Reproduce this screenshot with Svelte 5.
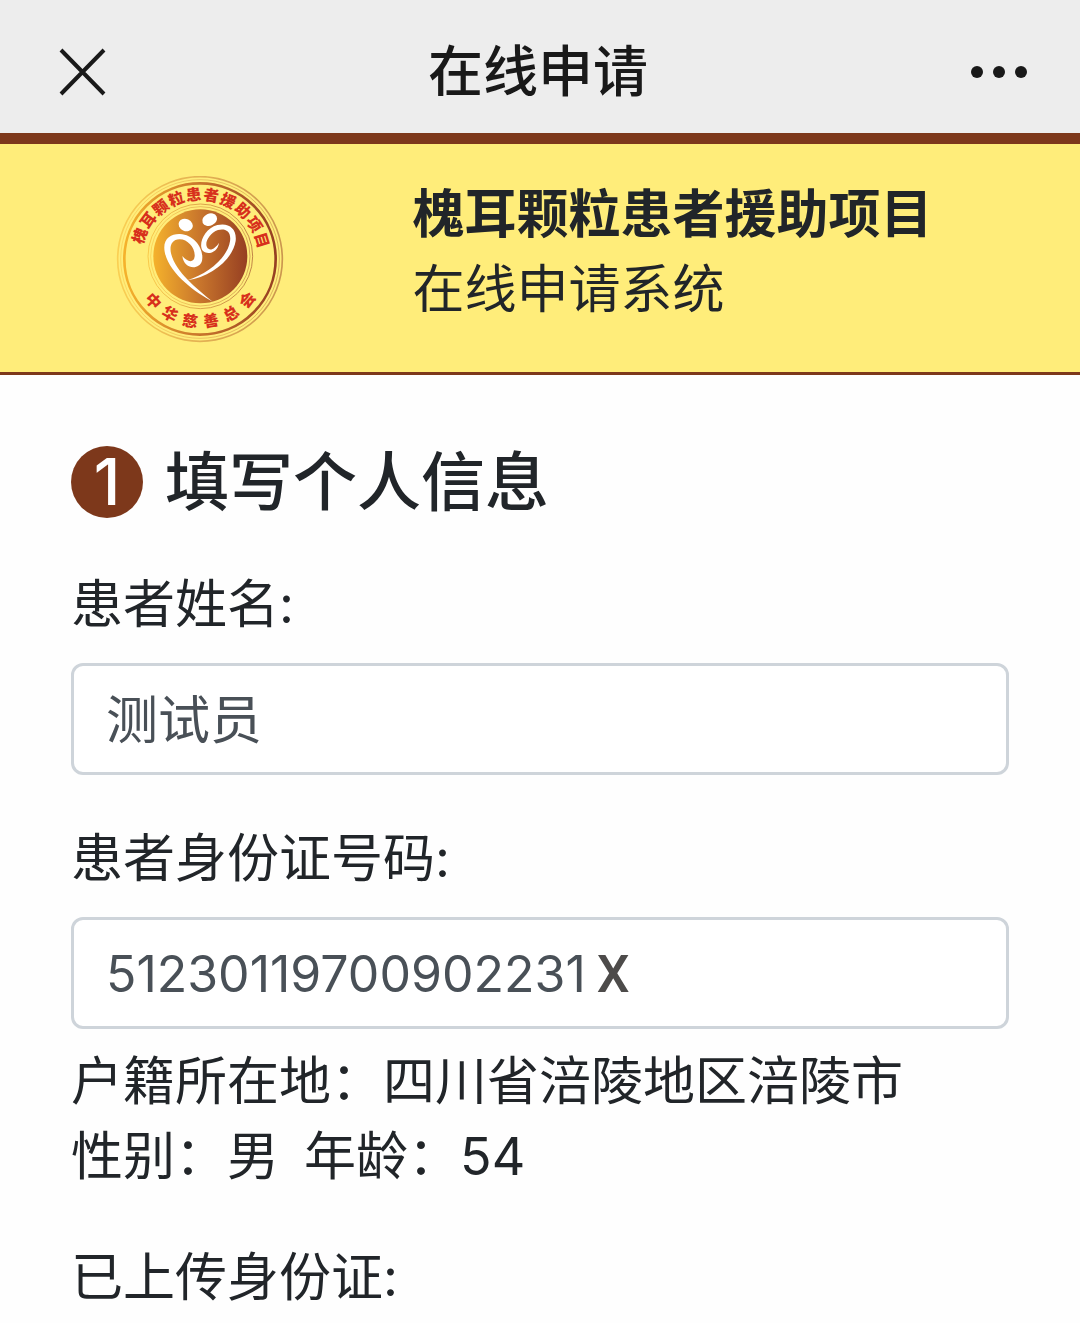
<script lang="ts">
  let name = $state('测试员')
  let idNumber = $state('51230119700902231')

  const profile = {
    region: '四川省涪陵地区涪陵市',
    gender: '男',
    age: 54,
  }

  // characters set around the logo ring, angles in degrees
  const ringTop = [...'槐耳颗粒患者援助项目'].map((char, i) => ({ char, angle: -69 + i * 15.8 }))
  const ringBottom = [...'中华慈善总会'].map((char, i) => ({ char, angle: 48 - i * 19.4 }))
</script>

<nav class="nav-bar">
  <button class="nav-btn" aria-label="关闭">
    <svg width="48" height="48" viewBox="0 0 48 48">
      <path d="M3 2 L46 46 M46 2 L3 46" fill="none" stroke="#191919" stroke-width="4" />
    </svg>
  </button>
  <div class="nav-title">在线申请</div>
  <button class="nav-btn" aria-label="更多">
    <svg width="58" height="14" viewBox="0 0 58 14">
      <circle cx="7" cy="7" r="6" fill="#191919" />
      <circle cx="29" cy="7" r="6" fill="#191919" />
      <circle cx="51" cy="7" r="6" fill="#191919" />
    </svg>
  </button>
</nav>

<header class="banner">
  <div class="logo">
    <svg width="168" height="168" viewBox="48 48 504 504" role="img" aria-label="槐耳颗粒患者援助项目">
      <defs>
        <linearGradient id="disc" x1="0" x2="1" y1="0" y2="0">
          <stop offset="0" stop-color="#f5b22c" />
          <stop offset="0.5" stop-color="#c8752c" />
          <stop offset="1" stop-color="#963f22" />
        </linearGradient>
      </defs>
      <g fill="none" stroke="url(#disc)">
        <circle cx="300" cy="297" r="247" stroke-width="5" opacity="0.5" />
        <circle cx="300" cy="297" r="238" stroke-width="3" opacity="0.35" />
        <circle cx="300" cy="297" r="227" stroke-width="8" />
        <circle cx="301" cy="289" r="157" stroke-width="3" opacity="0.6" />
        <circle cx="301" cy="289" r="149" stroke-width="3" opacity="0.4" />
      </g>
      <circle cx="301" cy="289" r="141" fill="url(#disc)" />
      <g fill="#fff">
        <ellipse cx="257" cy="195" rx="22" ry="18" transform="rotate(25 257 195)" />
        <ellipse cx="329" cy="179" rx="23" ry="18" transform="rotate(-25 329 179)" />
        <path d="M338 425 C285 396 206 340 194 275 C187 236 213 221 240 222 C283 224 313 267 306 302 C299 330 252 330 247 288 C263 308 282 309 284 289 C286 263 262 237 238 238 C216 239 208 257 213 280 C226 335 290 386 338 425 Z" />
        <path d="M262 361 C323 342 383 293 390 244 C395 212 374 204 354 210 C329 219 313 247 321 262 C329 276 347 265 357 248 C354 276 325 286 310 274 C292 257 312 205 352 195 C386 187 411 205 407 243 C399 297 334 351 262 361 Z" />
      </g>
      <g class="logo-text">
        {#each ringTop as { char, angle }}
          <text x="300" y="120" transform="rotate({angle} 300 297)">{char}</text>
        {/each}
        {#each ringBottom as { char, angle }}
          <text x="300" y="502" transform="rotate({angle} 300 297)">{char}</text>
        {/each}
      </g>
    </svg>
  </div>
  <div class="banner-text">
    <strong>槐耳颗粒患者援助项目</strong>
    <span>在线申请系统</span>
  </div>
</header>

<main>
  <h1><span class="step">1</span>填写个人信息</h1>

  <div class="field">
    <label for="patient-name">患者姓名:</label>
    <div class="control">
      <input id="patient-name" class="full" type="text" bind:value={name} />
    </div>
  </div>

  <div class="field">
    <label for="patient-id">患者身份证号码:</label>
    <div class="control">
      <input id="patient-id" class="number" type="text" bind:value={idNumber} />
      <span class="check-digit">X</span>
    </div>
    <div class="info">
      <p>户籍所在地：{profile.region}</p>
      <p><span>性别：{profile.gender}</span><span>年龄：{profile.age}</span></p>
    </div>
  </div>

  <div class="field">
    <div class="label">已上传身份证:</div>
  </div>
</main>

<style>
  :global(body) {
    margin: 0;
    background: #fefefe;
    color: #212529;
    font-family: Inter, 'Noto Sans CJK SC', sans-serif;
    font-size: 52px;
    line-height: 75px;
  }
  .nav-bar {
    display: flex;
    align-items: center;
    justify-content: space-between;
    padding: 34px 52px 24px 58px;
    background: #ededed;
    color: #191919;
  }
  .nav-btn {
    display: flex;
    padding: 0;
    border: none;
    background: none;
    cursor: pointer;
  }
  .nav-title {
    font-size: 55px;
    font-weight: 500;
  }
  .banner {
    display: flex;
    padding: 32px 0 28px;
    border-top: 11px solid #7d381b;
    border-bottom: 3px solid #7d381b;
    background: #ffed7a;
  }
  .logo {
    display: flex;
    justify-content: center;
    width: 37%;
  }
  .logo-text {
    fill: #d7301c;
    font-family: 'Noto Sans CJK SC', sans-serif;
    font-size: 46px;
    font-weight: 900;
    text-anchor: middle;
  }
  .banner-text {
    display: flex;
    flex-direction: column;
    padding: 1px 0 0 13px;
  }
  main {
    padding: 71px 71px 10px;
  }
  h1 {
    display: flex;
    align-items: center;
    gap: 22px;
    margin: 0 0 49px;
    font-size: 64px;
    font-weight: 500;
    line-height: 72px;
  }
  .step {
    width: 72px;
    height: 72px;
    border-radius: 50%;
    background: #7d381b;
    color: #fff;
    text-align: center;
  }
  .field {
    margin-bottom: 46px;
  }
  label,
  .label {
    display: block;
    margin-bottom: 21px;
  }
  .control {
    display: flex;
    align-items: center;
    gap: 11px;
    height: 104px;
    padding: 2px 32px 0;
    border: 3px solid #ced4da;
    border-radius: 12px;
    background: #fff;
  }
  input {
    min-width: 0;
    padding: 0;
    border: none;
    outline: none;
    background: none;
    color: #495057;
    font: inherit;
  }
  .full {
    flex: 1;
  }
  .number {
    field-sizing: content;
    font-size: 50px;
  }
  .check-digit {
    color: #4d4b4a;
    font-family: Roboto, sans-serif;
    font-weight: 500;
  }
  .info {
    padding-top: 15px;
  }
  p {
    display: flex;
    gap: 25px;
    margin: 0;
  }
</style>
